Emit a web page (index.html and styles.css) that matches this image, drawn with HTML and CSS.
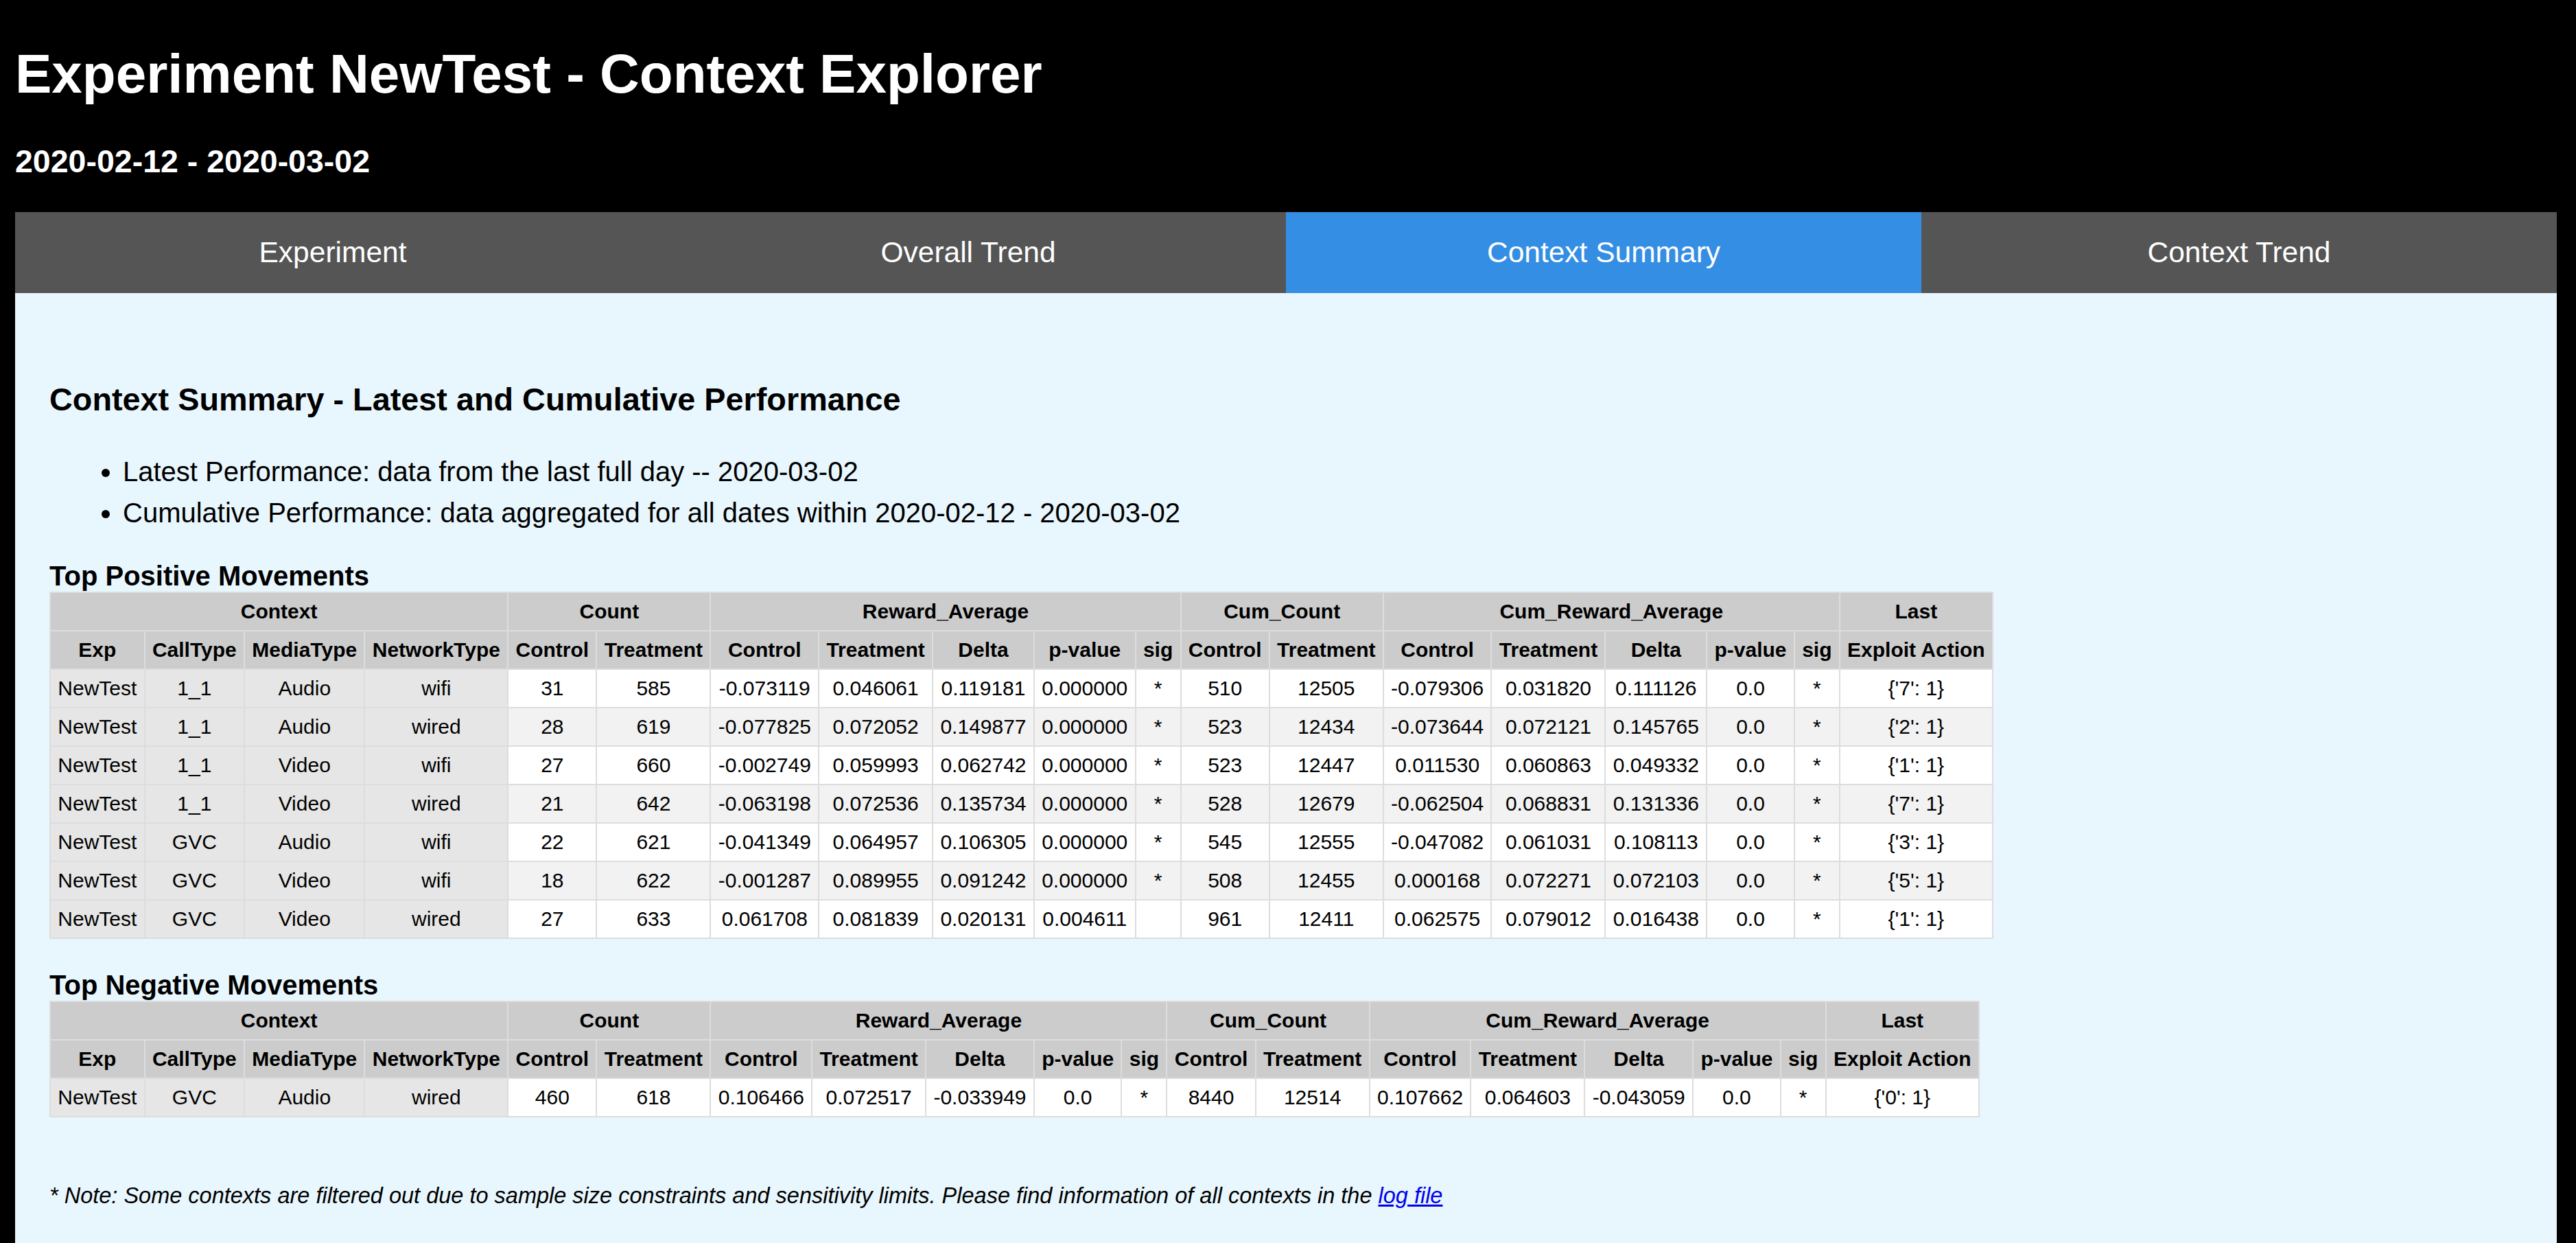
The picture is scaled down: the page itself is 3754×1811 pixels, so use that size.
FILE: index.html
```html
<!DOCTYPE html>
<html lang="en">
<head>
<meta charset="utf-8">
<title>Experiment NewTest - Context Explorer</title>
<link rel="stylesheet" href="styles.css">
</head>
<body>
<header class="page-header">
  <h1 class="title">Experiment NewTest - Context Explorer</h1>
  <h3 class="date-range">2020-02-12 - 2020-03-02</h3>
</header>
<nav class="tabs">
  <div class="tab">Experiment</div>
  <div class="tab">Overall Trend</div>
  <div class="tab tab-active">Context Summary</div>
  <div class="tab">Context Trend</div>
</nav>
<main class="content">
  <h3 class="section-title">Context Summary - Latest and Cumulative Performance</h3>
  <ul class="notes">
    <li>Latest Performance: data from the last full day -- 2020-03-02</li>
    <li>Cumulative Performance: data aggregated for all dates within 2020-02-12 - 2020-03-02</li>
  </ul>

  <h4 class="table-title">Top Positive Movements</h4>
  <table class="data">
    <thead>
      <tr>
        <th colspan="4">Context</th>
        <th colspan="2">Count</th>
        <th colspan="5">Reward_Average</th>
        <th colspan="2">Cum_Count</th>
        <th colspan="5">Cum_Reward_Average</th>
        <th>Last</th>
      </tr>
      <tr>
        <th>Exp</th><th>CallType</th><th>MediaType</th><th>NetworkType</th>
        <th>Control</th><th>Treatment</th>
        <th>Control</th><th>Treatment</th><th>Delta</th><th>p-value</th><th>sig</th>
        <th>Control</th><th>Treatment</th>
        <th>Control</th><th>Treatment</th><th>Delta</th><th>p-value</th><th>sig</th>
        <th>Exploit Action</th>
      </tr>
    </thead>
    <tbody>
      <tr><td class="ctx">NewTest</td><td class="ctx">1_1</td><td class="ctx">Audio</td><td class="ctx">wifi</td><td>31</td><td>585</td><td>-0.073119</td><td>0.046061</td><td>0.119181</td><td>0.000000</td><td class="sig">*</td><td>510</td><td>12505</td><td>-0.079306</td><td>0.031820</td><td>0.111126</td><td>0.0</td><td class="sig">*</td><td>{'7': 1}</td></tr>
      <tr><td class="ctx">NewTest</td><td class="ctx">1_1</td><td class="ctx">Audio</td><td class="ctx">wired</td><td>28</td><td>619</td><td>-0.077825</td><td>0.072052</td><td>0.149877</td><td>0.000000</td><td class="sig">*</td><td>523</td><td>12434</td><td>-0.073644</td><td>0.072121</td><td>0.145765</td><td>0.0</td><td class="sig">*</td><td>{'2': 1}</td></tr>
      <tr><td class="ctx">NewTest</td><td class="ctx">1_1</td><td class="ctx">Video</td><td class="ctx">wifi</td><td>27</td><td>660</td><td>-0.002749</td><td>0.059993</td><td>0.062742</td><td>0.000000</td><td class="sig">*</td><td>523</td><td>12447</td><td>0.011530</td><td>0.060863</td><td>0.049332</td><td>0.0</td><td class="sig">*</td><td>{'1': 1}</td></tr>
      <tr><td class="ctx">NewTest</td><td class="ctx">1_1</td><td class="ctx">Video</td><td class="ctx">wired</td><td>21</td><td>642</td><td>-0.063198</td><td>0.072536</td><td>0.135734</td><td>0.000000</td><td class="sig">*</td><td>528</td><td>12679</td><td>-0.062504</td><td>0.068831</td><td>0.131336</td><td>0.0</td><td class="sig">*</td><td>{'7': 1}</td></tr>
      <tr><td class="ctx">NewTest</td><td class="ctx">GVC</td><td class="ctx">Audio</td><td class="ctx">wifi</td><td>22</td><td>621</td><td>-0.041349</td><td>0.064957</td><td>0.106305</td><td>0.000000</td><td class="sig">*</td><td>545</td><td>12555</td><td>-0.047082</td><td>0.061031</td><td>0.108113</td><td>0.0</td><td class="sig">*</td><td>{'3': 1}</td></tr>
      <tr><td class="ctx">NewTest</td><td class="ctx">GVC</td><td class="ctx">Video</td><td class="ctx">wifi</td><td>18</td><td>622</td><td>-0.001287</td><td>0.089955</td><td>0.091242</td><td>0.000000</td><td class="sig">*</td><td>508</td><td>12455</td><td>0.000168</td><td>0.072271</td><td>0.072103</td><td>0.0</td><td class="sig">*</td><td>{'5': 1}</td></tr>
      <tr><td class="ctx">NewTest</td><td class="ctx">GVC</td><td class="ctx">Video</td><td class="ctx">wired</td><td>27</td><td>633</td><td>0.061708</td><td>0.081839</td><td>0.020131</td><td>0.004611</td><td class="sig"></td><td>961</td><td>12411</td><td>0.062575</td><td>0.079012</td><td>0.016438</td><td>0.0</td><td class="sig">*</td><td>{'1': 1}</td></tr>
    </tbody>
  </table>

  <h4 class="table-title table-title-second">Top Negative Movements</h4>
  <table class="data">
    <thead>
      <tr>
        <th colspan="4">Context</th>
        <th colspan="2">Count</th>
        <th colspan="5">Reward_Average</th>
        <th colspan="2">Cum_Count</th>
        <th colspan="5">Cum_Reward_Average</th>
        <th>Last</th>
      </tr>
      <tr>
        <th>Exp</th><th>CallType</th><th>MediaType</th><th>NetworkType</th>
        <th>Control</th><th>Treatment</th>
        <th>Control</th><th>Treatment</th><th>Delta</th><th>p-value</th><th>sig</th>
        <th>Control</th><th>Treatment</th>
        <th>Control</th><th>Treatment</th><th>Delta</th><th>p-value</th><th>sig</th>
        <th>Exploit Action</th>
      </tr>
    </thead>
    <tbody>
      <tr><td class="ctx">NewTest</td><td class="ctx">GVC</td><td class="ctx">Audio</td><td class="ctx">wired</td><td>460</td><td>618</td><td>0.106466</td><td>0.072517</td><td>-0.033949</td><td>0.0</td><td class="sig">*</td><td>8440</td><td>12514</td><td>0.107662</td><td>0.064603</td><td>-0.043059</td><td>0.0</td><td class="sig">*</td><td>{'0': 1}</td></tr>
    </tbody>
  </table>

  <p class="footnote">* Note: Some contexts are filtered out due to sample size constraints and sensitivity limits. Please find information of all contexts in the <a href="#" class="log-link">log file</a></p>
</main>
</body>
</html>
```
FILE: styles.css
```css
html, body {
  margin: 0;
  padding: 0;
}

body {
  background: #000000;
  color: #000000;
  font-family: "Liberation Sans", Arial, sans-serif;
  padding: 0 28px 0 22px;
  min-height: 100vh;
  box-sizing: border-box;
  display: flex;
  flex-direction: column;
}

.page-header {
  color: #ffffff;
  padding-top: 62px;
  padding-bottom: 47px;
}

.title {
  margin: 0;
  font-size: 80px;
  line-height: 92px;
  font-weight: bold;
}

.date-range {
  margin: 54px 0 0 0;
  font-size: 46.5px;
  line-height: 54px;
  font-weight: bold;
}

.tabs {
  display: flex;
  height: 118px;
  background: #555555;
}

.tab {
  flex: 1 1 0;
  display: flex;
  align-items: center;
  justify-content: center;
  color: #ffffff;
  font-size: 42.5px;
  background: #555555;
}

.tab-active {
  background: #348ee3;
}

.content {
  flex: 1 1 auto;
  background: #e8f6fd;
  padding: 128px 50px 40px 50px;
}

.section-title {
  margin: 0;
  font-size: 46.8px;
  line-height: 54px;
  font-weight: bold;
}

.notes {
  margin: 48px 0 0 0;
  padding-left: 107px;
  font-size: 40px;
  line-height: 60px;
}

.table-title {
  margin: 40px 0 0 0;
  font-size: 40px;
  line-height: 45px;
  font-weight: bold;
}

.table-title-second {
  margin-top: 45px;
}

.data {
  border-collapse: collapse;
  font-size: 30px;
  line-height: 34px;
  border: 2px solid #dddddd;
}

.data th,
.data td {
  border: 2px solid #dddddd;
  padding: 10px 10.3px;
  text-align: center;
  white-space: nowrap;
}

.data th {
  background: #cccccc;
  font-weight: bold;
}

.data tbody tr:nth-child(odd) td {
  background: #ffffff;
}

.data tbody tr:nth-child(even) td {
  background: #f2f2f2;
}

.data tbody tr td.ctx {
  background: #e6e6e6;
}

.data td.sig {
  vertical-align: top;
}

.footnote {
  margin: 95px 0 0 0;
  font-size: 32.5px;
  line-height: 38px;
  font-style: italic;
}

.log-link {
  color: #0000ee;
  text-decoration: underline;
}
```
